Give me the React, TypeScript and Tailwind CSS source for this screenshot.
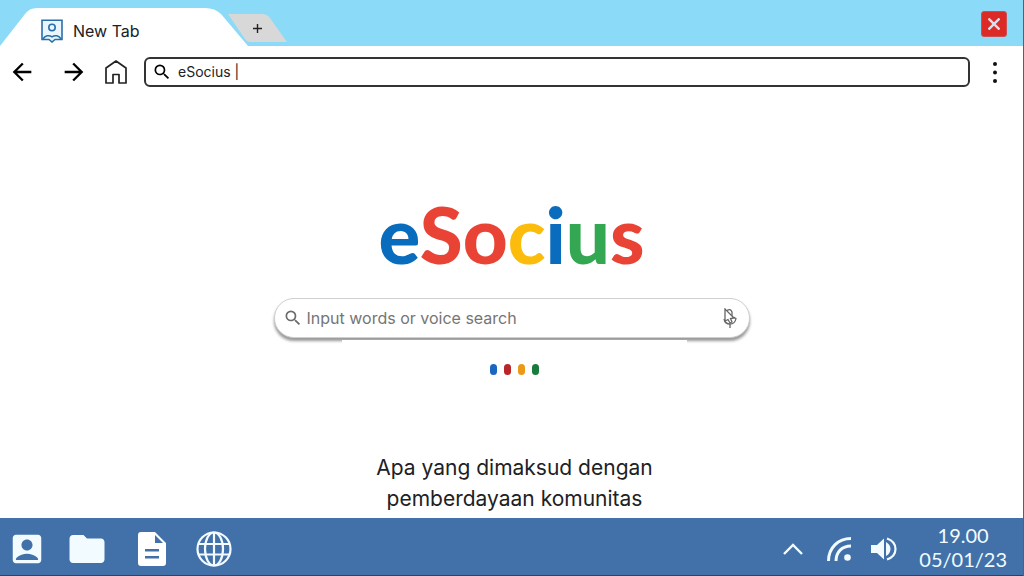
import { useState } from 'react';
import {
  MdAccountBox,
  MdArrowBack,
  MdArrowForward,
  MdFolder,
  MdSearch,
} from 'react-icons/md';

const LOGO = [
  { letter: 'e', color: 'text-[#0a6cbd]' },
  { letter: 'S', color: 'text-[#e94335]' },
  { letter: 'o', color: 'text-[#e94335]' },
  { letter: 'c', color: 'text-[#fbbc0b]' },
  { letter: 'i', color: 'text-[#0a6cbd]' },
  { letter: 'u', color: 'text-[#34a752]' },
  { letter: 's', color: 'text-[#e94335]' },
];

const DOTS = ['bg-[#1a67c0]', 'bg-[#b8262b]', 'bg-[#ea9a17]', 'bg-[#197c3e]'];

const ProfileBadgeIcon = () => (
  <svg className="w-[22px] h-6" viewBox="0 0 22 24" fill="none" stroke="#2a6fa8" strokeWidth={1.6}>
    <path d="M1 1.200H21V20.500H14L11 23L8 20.500H1Z" fill="#e9f6fd" />
    <circle cx="11" cy="8.500" r="3.200" />
    <path d="M2 20C4 16.500 8 15.800 11 17.800C14 15.800 18 16.500 20 20" />
  </svg>
);

const HomeIcon = () => (
  <svg className="w-6 h-6" viewBox="0 0 24 24" fill="none" stroke="#222" strokeWidth={1.7} strokeLinejoin="round">
    <path d="M2 8L12 1L22 8V23H15V14.500H9V23H2Z" />
  </svg>
);

const FileIcon = () => (
  <svg className="w-7 h-[34px]" viewBox="0 0 28 34">
    <path fill="#fff" fillRule="evenodd" d="M3 0H17L28 11V31Q28 34 25 34H3Q0 34 0 31V3Q0 0 3 0ZM17 3V11H25ZM7 17V19.500H21V17ZM7 24V26.500H21V24Z" />
  </svg>
);

const GlobeIcon = () => (
  <svg className="w-9 h-9" viewBox="0 0 36 36" fill="none" stroke="#f2fbff" strokeWidth={2.2}>
    <circle cx="18" cy="18" r="16.500" />
    <ellipse cx="18" cy="18" rx="9" ry="16.500" />
    <path d="M18 1V35M2 13H34M2 23.500H34" />
  </svg>
);

const SignalIcon = () => (
  <svg className="w-6 h-6" viewBox="0 0 24 24" fill="none" stroke="#f2fbff" strokeWidth={3}>
    <path d="M1.500 24C1.500 11 11 1.500 24 1.500M9 24C9 15 15 9 24 9" />
    <circle cx="20.500" cy="20.500" r="3.300" fill="#f2fbff" stroke="none" />
  </svg>
);

const VolumeIcon = () => (
  <svg className="w-[26px] h-6" viewBox="0 0 26 24">
    <path fill="#f2fbff" d="M0 8H6L13 1.500V22.500L6 16H0ZM15 5Q19.500 7.500 19.500 12T15 19Z" />
    <path d="M16 1.500Q24.500 4.500 24.500 12T16 22.500" fill="none" stroke="#f2fbff" strokeWidth={2.2} />
  </svg>
);

// pointer resting over the microphone
const MicPointerIcon = () => (
  <svg className="w-4 h-5" viewBox="0 0 16 20" fill="none" stroke="#666" strokeWidth={1.3}>
    <path d="M5 2.500Q8.500 0 10 4V8M2 11Q3 16 8 16T14 10.500L11.500 9M8 16V20" />
    <path d="M3 1V13L6 11.500L8 15L10 14L8.500 10.500L12 10Z" fill="#fff" />
  </svg>
);

const App = () => {
  const [address, setAddress] = useState('eSocius |');
  const [query, setQuery] = useState('');

  return (
    <div className="h-screen flex flex-col bg-white border-r border-[#4f6470] font-['Inter',sans-serif] text-[#202124]">
      {/* Tab strip */}
      <header className="h-[46px] shrink-0 flex items-end justify-between bg-[#8bdaf8]">
        <div className="flex items-end">
          <button className="relative w-[248px] h-[38px] pl-[41px] pt-2 flex items-center gap-2.5 text-base">
            <svg className="absolute inset-0 w-full h-full" viewBox="0 0 248 38" fill="#fff" preserveAspectRatio="none">
              <path d="M0 38L25 6Q29 0 37 0H205Q215 0 221 6L248 38Z" />
            </svg>
            <span className="relative"><ProfileBadgeIcon /></span>
            <span className="relative">New Tab</span>
          </button>
          <button aria-label="Open a new tab" className="-ml-5 mb-1">
            <svg className="w-[60px] h-7" viewBox="0 0 60 28">
              <path d="M0 0H34Q39 0 42 4L59 28H22Q19 28 17 25Z" fill="#d8d8d8" />
              <path d="M25 14.500H34M29.500 10V19" stroke="#222" strokeWidth={1.4} />
            </svg>
          </button>
        </div>
        <button aria-label="Close" className="w-[26px] h-[26px] mr-4 mb-[9px] flex items-center justify-center rounded-[3px] bg-[#dc2b27] border border-[#c94f55]">
          <svg className="w-3 h-3" viewBox="0 0 12 12" stroke="#dcdff0" strokeWidth={2.4}>
            <path d="M0.500 0.500L11.500 11.500M11.500 0.500L0.500 11.500" />
          </svg>
        </button>
      </header>

      {/* Toolbar */}
      <nav className="h-[51px] shrink-0 flex items-center pl-2 pr-[25px]">
        <button aria-label="Back" className="text-[28px] text-black"><MdArrowBack /></button>
        <button aria-label="Forward" className="ml-6 text-[28px] text-black"><MdArrowForward /></button>
        <button aria-label="Home" className="ml-4"><HomeIcon /></button>
        <label className="ml-4 h-[30px] flex-1 flex items-center gap-1.5 pl-1.5 border-2 border-[#333] rounded-md">
          <MdSearch className="text-xl text-black" />
          <input
            aria-label="Address"
            className="flex-1 min-w-0 bg-transparent text-sm outline-none"
            value={address}
            onChange={(e) => setAddress(e.target.value)}
          />
        </label>
        <button aria-label="Menu" className="ml-[22px]">
          <svg className="w-1.5 h-6" viewBox="0 0 6 24" fill="#111">
            <circle cx="3" cy="4" r="2" />
            <circle cx="3" cy="12.500" r="2" />
            <circle cx="3" cy="21" r="2" />
          </svg>
        </button>
      </nav>

      {/* Search page */}
      <main className="flex-1 min-h-0 flex flex-col items-center">
        <h1 className="mt-[101px] font-['Lato',sans-serif] text-[78px] leading-[72px] font-black">
          {LOGO.map((item, i) => (
            <span key={i} className={item.color}>{item.letter}</span>
          ))}
        </h1>
        <div className="relative mt-7 w-[476px] max-w-full">
          <label className="h-10 flex items-center gap-1 pl-2 pr-[11px] bg-white border border-[#cfcfcf] rounded-full shadow-[0_3px_3px_rgba(0,0,0,0.4)]">
            <MdSearch className="text-xl text-[#6b6b6b]" />
            <input
              aria-label="Search"
              className="flex-1 min-w-0 bg-transparent text-base outline-none placeholder:text-[#757575]"
              placeholder="Input words or voice search"
              value={query}
              onChange={(e) => setQuery(e.target.value)}
            />
            <button aria-label="Voice search"><MicPointerIcon /></button>
          </label>
          <div className="absolute top-full left-[68px] right-[63px] mt-0.5 h-2 bg-white" />
        </div>
        <div className="mt-[26px] ml-1.5 flex gap-[7px]">
          {DOTS.map((color) => (
            <span key={color} className={`w-[7px] h-[11px] rounded-full ${color}`} />
          ))}
        </div>
        <p className="mt-auto mb-1 ml-1.5 w-[300px] text-center text-[21px] leading-[31px]">
          Apa yang dimaksud dengan pemberdayaan komunitas
        </p>
      </main>

      {/* Taskbar */}
      <footer className="h-[58px] shrink-0 flex items-center justify-between pt-1 pl-2 pr-4 bg-[#4171a8] border-b border-[#26427c] text-[#f2fbff]">
        <div className="flex items-center">
          <button aria-label="Contacts" className="text-[38px]"><MdAccountBox /></button>
          <button aria-label="Files" className="ml-5 text-[42px]"><MdFolder /></button>
          <button aria-label="Documents" className="ml-[30px]"><FileIcon /></button>
          <button aria-label="Browser" className="ml-[30px]"><GlobeIcon /></button>
        </div>
        <div className="flex items-center">
          <button aria-label="Show hidden icons">
            <svg className="w-5 h-3" viewBox="0 0 20 12" fill="none" stroke="#f2fbff" strokeWidth={2.4}>
              <path d="M1 11L10 2L19 11" />
            </svg>
          </button>
          <button aria-label="Network" className="ml-6"><SignalIcon /></button>
          <button aria-label="Volume" className="ml-5"><VolumeIcon /></button>
          <div className="ml-[22px] pb-1 text-center font-['Lato',sans-serif] text-xl leading-6">
            <div>19.00</div>
            <div>05/01/23</div>
          </div>
        </div>
      </footer>
    </div>
  );
};

export default App;
